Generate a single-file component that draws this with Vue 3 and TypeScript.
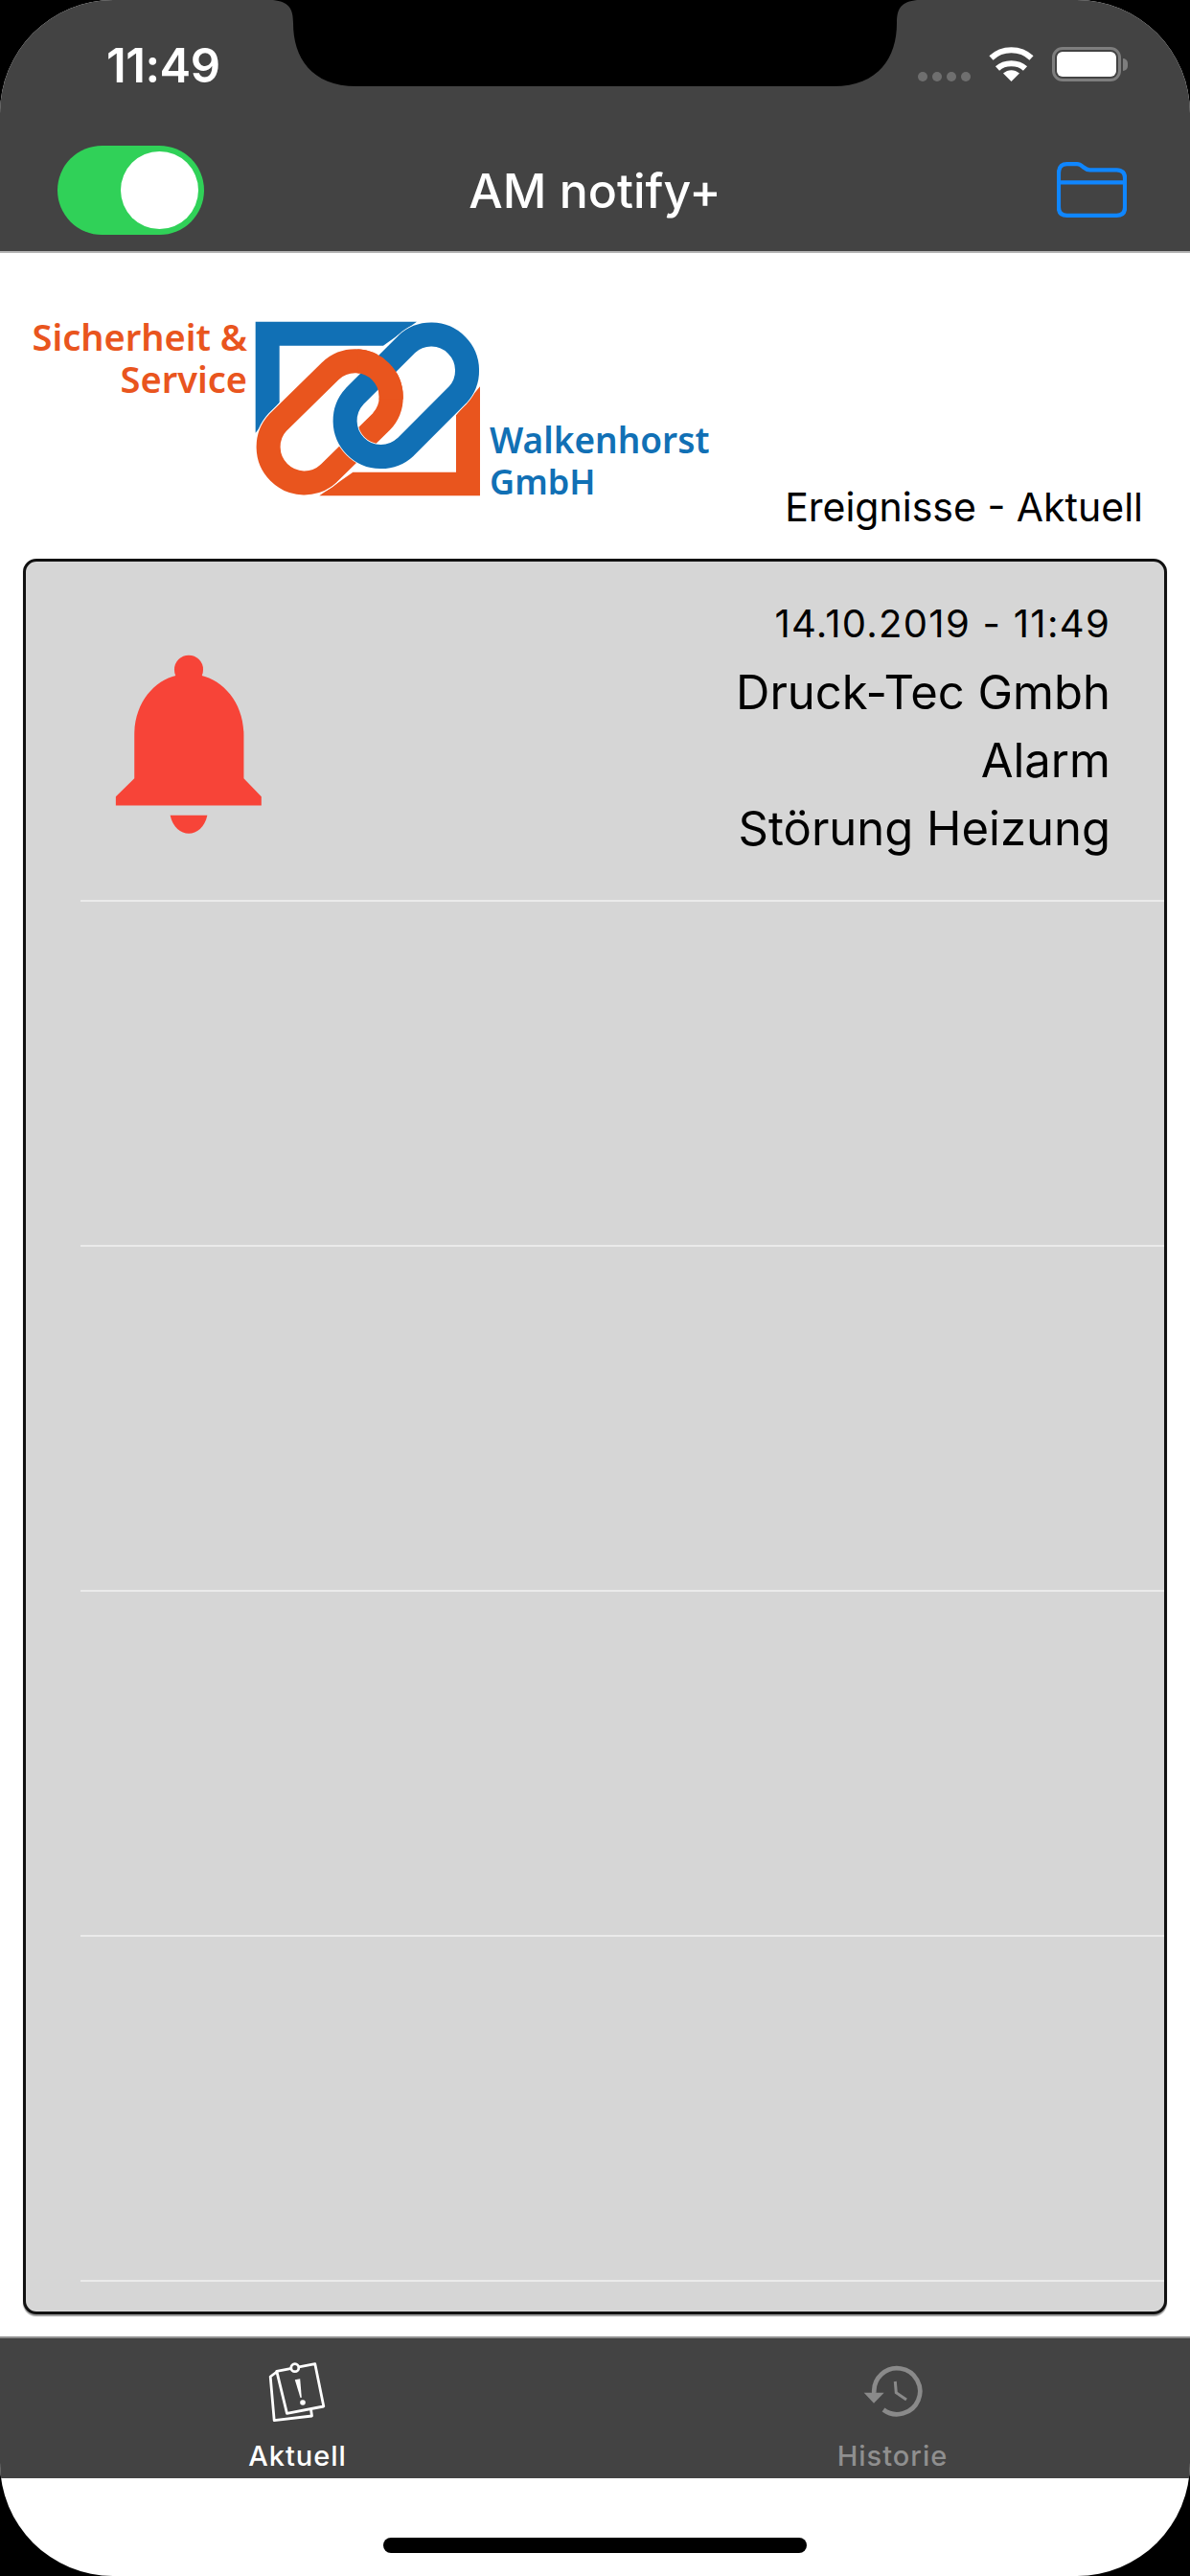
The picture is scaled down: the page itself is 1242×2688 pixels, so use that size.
<script setup lang="ts">
interface AlarmEvent {
  stamp: string
  company: string
  kind: string
  detail: string
}

const current: AlarmEvent = {
  stamp: '14.10.2019 - 11:49',
  company: 'Druck-Tec Gmbh',
  kind: 'Alarm',
  detail: 'Störung Heizung',
}

const emptyRows: number[] = [1, 2, 3, 4]
const signalDots: number[] = [1, 2, 3, 4]
</script>

<template>
  <div class="device">
    <div class="screen">
      <header class="top">
        <div class="status">
          <span class="time">11:49</span>
          <div class="indicators">
            <div class="signal">
              <i v-for="dot in signalDots" :key="dot" class="dot"></i>
            </div>
            <svg class="wifi" width="47" height="36" viewBox="0 0 47 36">
              <path d="M2.500 11.500C14 .5 33 .5 44.500 11.500" fill="none" stroke="#fff" stroke-width="6" />
              <path d="M9 22.500C16.500 15.500 30.500 15.500 38 22.500" fill="none" stroke="#fff" stroke-width="6" />
              <path d="M23.500 36L15 27.500C20 23 27 23 32 27.500Z" fill="#fff" />
            </svg>
            <div class="battery"><div class="charge"></div></div>
            <div class="tip"></div>
          </div>
        </div>
        <nav class="nav">
          <div class="toggle"><div class="knob"></div></div>
          <h1 class="title">AM notify+</h1>
          <svg class="folder" width="73" height="60" viewBox="0 0 76 62">
            <path
              d="M2 14C2 6 5 3 11 3H22C25 3 26 4 29 6.500C32 9 33 9.500 36 9.500H65C71 9.500 74 13 74 18V50C74 56 71 59 65 59H11C5 59 2 56 2 50Z"
              fill="none"
              stroke="#0f86ff"
              stroke-width="4.500"
            />
            <path d="M2 23H74" fill="none" stroke="#0f86ff" stroke-width="4.500" />
          </svg>
        </nav>
      </header>

      <section class="intro">
        <svg class="logo" width="730" height="240" viewBox="20 310 730 240">
          <g class="logo-text orange">
            <text class="upper" x="258" y="366" text-anchor="end">Sicherheit &amp;</text>
            <text class="upper" x="258" y="410" text-anchor="end">Service</text>
          </g>
          <g class="logo-text blue">
            <text x="511" y="473">Walkenhorst</text>
            <text class="short" x="511" y="516">GmbH</text>
          </g>
          <g transform="translate(240 320) scale(.33333)">
            <defs>
              <clipPath id="link-over">
                <rect x="400" y="100" width="200" height="190" />
              </clipPath>
            </defs>
            <path d="M80 47H585L480 122H155V300L80 395Z" fill="#1170b5" />
            <path d="M783 250V592H280L385 518H708V340Z" fill="#e9551e" />
            <path
              d="M474.500 359.500A112.500 112.500 0 0 0 315.500 200.500L150.500 362.500A112.500 112.500 0 0 0 309.500 521.500Z"
              fill="none"
              stroke="#fff"
              stroke-width="82"
            />
            <path
              d="M474.500 359.500A112.500 112.500 0 0 0 315.500 200.500L150.500 362.500A112.500 112.500 0 0 0 309.500 521.500Z"
              fill="none"
              stroke="#e9551e"
              stroke-width="75"
            />
            <path
              d="M712.500 276.500A112.500 112.500 0 0 0 553.500 117.500L390.500 280.500A112.500 112.500 0 0 0 549.500 439.500Z"
              fill="none"
              stroke="#fff"
              stroke-width="80"
            />
            <path
              d="M712.500 276.500A112.500 112.500 0 0 0 553.500 117.500L390.500 280.500A112.500 112.500 0 0 0 549.500 439.500Z"
              fill="none"
              stroke="#1170b5"
              stroke-width="75"
            />
            <g clip-path="url(#link-over)">
              <path
                d="M474.500 359.500A112.500 112.500 0 0 0 315.500 200.500"
                fill="none"
                stroke="#e9551e"
                stroke-width="75"
              />
            </g>
          </g>
        </svg>
        <p class="caption">Ereignisse - Aktuell</p>
      </section>

      <main class="card">
        <article class="row first">
          <svg class="bell" width="154" height="187" viewBox="360 338 460 560">
            <circle cx="590" cy="385" r="45" fill="#f74438" />
            <path
              d="M420 725V590C420 490 480 420 552 403H628C700 420 762 490 762 590V725L817 782V810H362V782Z"
              fill="#f74438"
            />
            <path d="M532 840H648C640 878 615 897 590 897C565 897 540 878 532 840Z" fill="#f74438" />
          </svg>
          <div class="details">
            <div class="stamp">{{ current.stamp }}</div>
            <div class="line">{{ current.company }}</div>
            <div class="line">{{ current.kind }}</div>
            <div class="line">{{ current.detail }}</div>
          </div>
        </article>
        <div v-for="row in emptyRows" :key="row" class="row"></div>
      </main>

      <footer class="tabs">
        <div class="tab active">
          <svg class="tab-icon" width="66" height="66" viewBox="0 0 66 66">
            <g fill="none" stroke="#fff" stroke-width="2.800" stroke-linejoin="round">
              <path d="M10.800 13L4.200 18L8.200 63.700L47.500 59L46.500 52" />
              <path d="M10.800 12.300L50.800 4.700L59.800 49L21.500 56.300Z" />
              <circle cx="29.800" cy="8.700" r="4" fill="#434343" />
            </g>
            <path d="M29.800 21.300L35.200 20.300L36.800 39.700L35.500 40Z" fill="#fff" />
            <circle cx="38" cy="45" r="2.800" fill="#fff" />
          </svg>
          <span class="tab-label">Aktuell</span>
        </div>
        <div class="tab">
          <svg class="tab-icon" width="66" height="66" viewBox="0 0 66 66">
            <path
              d="M13.300 35A24 24 0 1 1 23 52.500"
              fill="none"
              stroke="#8a8a8a"
              stroke-width="4.700"
            />
            <path d="M2.700 34.700H23.700L13 45.700Z" fill="#8a8a8a" />
            <path d="M35.300 23L36.300 34.700L47 42" fill="none" stroke="#8a8a8a" stroke-width="3" />
          </svg>
          <span class="tab-label">Historie</span>
        </div>
      </footer>

      <div class="home"><div class="home-bar"></div></div>

      <svg class="notch" width="680" height="90" viewBox="0 0 680 90">
        <path
          d="M0 0C16 2 21 8 21 24C21 60 40 90 87 90H585C632 90 651 60 651 24C651 8 656 2 672 0Z"
          fill="#000"
        />
      </svg>
    </div>
  </div>
</template>

<style scoped>
.device {
  width: 1242px;
  height: 2688px;
  background: #000;
  font-family: Inter, "Liberation Sans", sans-serif;
}
.screen {
  position: relative;
  width: 1242px;
  height: 2688px;
  display: flex;
  flex-direction: column;
  overflow: hidden;
  border-radius: 118px;
  background: #fff;
}
.top {
  flex: none;
  height: 264px;
  box-sizing: border-box;
  background: #434343;
  border-bottom: 2px solid #b4b4b4;
}
.status {
  height: 140px;
  position: relative;
  display: flex;
  justify-content: space-between;
  padding: 0 65px 0 111px;
}
.time {
  margin-top: 40px;
  height: 58px;
  font-size: 49px;
  line-height: 58px;
  font-weight: 600;
  color: #fff;
  letter-spacing: -0.5px;
}
.indicators {
  display: flex;
  align-items: flex-start;
  padding-top: 49px;
}
.signal {
  display: flex;
  gap: 5px;
  margin-top: 26px;
  margin-right: 19px;
}
.dot {
  display: block;
  width: 10px;
  height: 10px;
  border-radius: 50%;
  background: #6f6f6f;
}
.wifi {
  margin-right: 19px;
}
.battery {
  box-sizing: border-box;
  width: 72px;
  height: 36px;
  padding: 2px;
  border: 3px solid #7e7e7e;
  border-radius: 11px;
}
.charge {
  width: 100%;
  height: 100%;
  background: #fff;
  border-radius: 6px;
}
.tip {
  width: 5px;
  height: 13px;
  margin: 12px 0 0 2px;
  border-radius: 0 5px 5px 0;
  background: #7e7e7e;
}
.nav {
  height: 122px;
  display: grid;
  grid-template-columns: 1fr auto 1fr;
  align-items: center;
  padding: 0 60px;
}
.toggle {
  box-sizing: border-box;
  width: 153px;
  height: 93px;
  margin-top: -5px;
  padding: 6px 6px 6px 66px;
  border-radius: 47px;
  background: #30d158;
}
.knob {
  width: 81px;
  height: 81px;
  border-radius: 50%;
  background: #fff;
}
.title {
  margin: 0 0 4px;
  font-size: 50px;
  line-height: 60px;
  font-weight: 500;
  color: #fff;
}
.folder {
  justify-self: end;
  margin: -6px 6px 0 0;
}
.intro {
  flex: none;
  height: 319px;
  box-sizing: border-box;
  display: flex;
  padding: 46px 49px 0 20px;
  position: relative;
}
.logo {
  flex: none;
}
.logo-text {
  font-family: "Noto Sans", sans-serif;
  font-weight: 600;
  font-size: 37px;
}
.upper {
  font-size: 38px;
}
.short {
  font-size: 36px;
}
.orange {
  fill: #e9551e;
}
.blue {
  fill: #1170b5;
}
.caption {
  position: absolute;
  right: 49px;
  top: 240px;
  margin: 0;
  font-size: 41px;
  line-height: 50px;
  color: #000;
}
.card {
  flex: none;
  height: 1832px;
  margin: 0 24px;
  box-sizing: border-box;
  border: 3px solid #111;
  border-radius: 14px;
  background: #d6d6d6;
  overflow: hidden;
  box-shadow: 0 2px 1px #999;
}
.row {
  height: 360px;
  box-sizing: border-box;
  margin-left: 57px;
  border-bottom: 2px solid #ebebeb;
}
.first {
  height: 355px;
  display: flex;
  justify-content: space-between;
  padding: 0 56px 0 36px;
}
.bell {
  flex: none;
  margin-top: 97px;
}
.details {
  text-align: right;
  color: #000;
  padding-top: 42px;
}
.stamp {
  font-size: 40px;
  line-height: 46px;
  letter-spacing: 1.300px;
  margin-bottom: 13px;
}
.line {
  font-size: 49px;
  line-height: 71px;
}
.tabs {
  flex: none;
  margin-top: 23px;
  height: 148px;
  box-sizing: border-box;
  display: flex;
  background: #434343;
  border-top: 2px solid #8f8f8f;
  color: #8f8f8f;
}
.tab {
  flex: 1;
  display: flex;
  flex-direction: column;
  align-items: center;
  padding-top: 22px;
}
.active {
  color: #fff;
}
.tab-icon {
  flex: none;
}
.tab-label {
  margin-top: 18px;
  font-size: 29px;
  line-height: 34px;
  font-weight: 500;
  letter-spacing: 1px;
}
.home {
  flex: 1;
  display: flex;
  justify-content: center;
  padding-top: 62px;
}
.home-bar {
  width: 442px;
  height: 16px;
  border-radius: 8px;
  background: #000;
}
.notch {
  position: absolute;
  left: 285px;
  top: 0;
}
</style>
